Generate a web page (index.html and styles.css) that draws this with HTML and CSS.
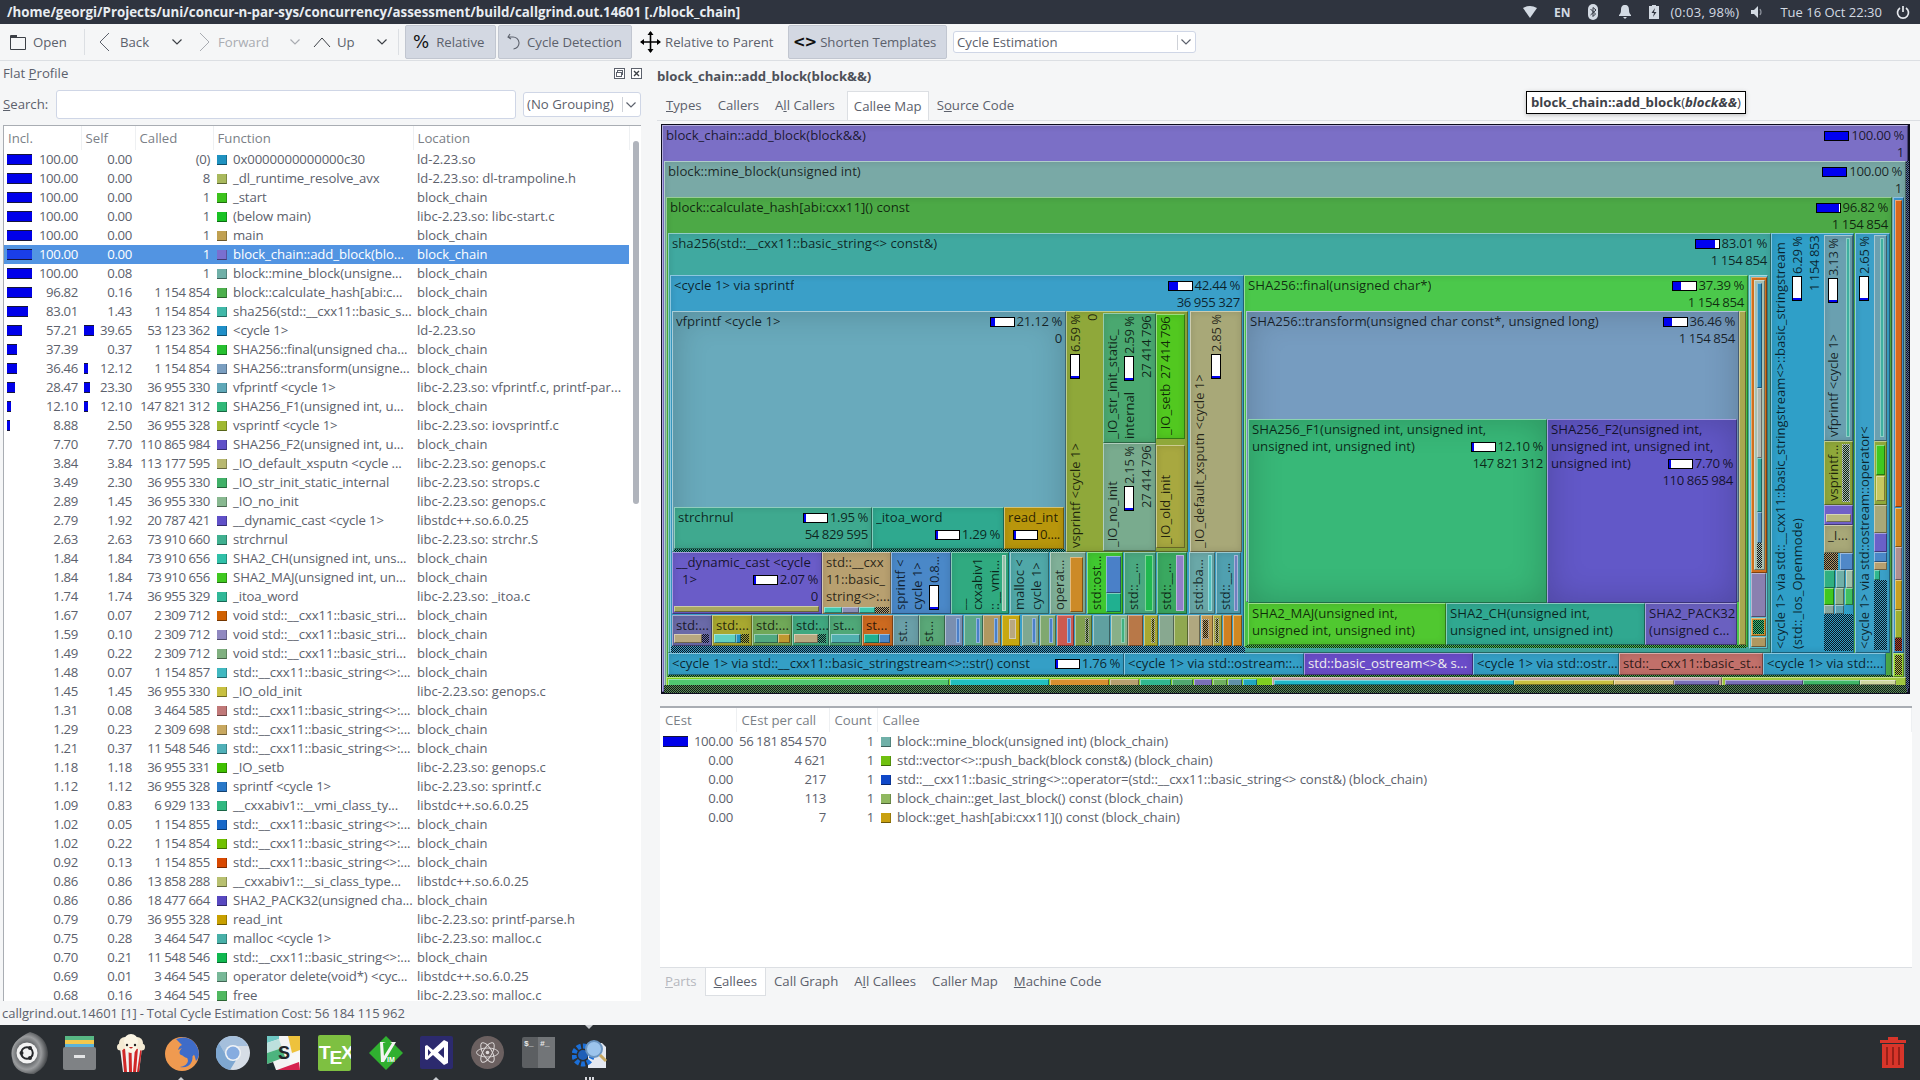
FILE: index.html
```html
<!DOCTYPE html>
<html lang="en">
<head>
<meta charset="utf-8">
<title>KCachegrind</title>
<link rel="stylesheet" href="styles.css">
</head>
<body>
<header class="topbar">
  <div class="wintitle">/home/georgi/Projects/uni/concur-n-par-sys/concurrency/assessment/build/callgrind.out.14601 [./block_chain]</div>
  <div class="tray">
    <svg class="t-wifi" width="14" height="12" viewBox="0 0 14 12"><path d="M0 2Q7-2 14 2L7 12Z" fill="#d3dae3"/></svg>
    <b class="t-en">EN</b>
    <svg class="t-bt" width="10" height="16" viewBox="0 0 10 16"><rect width="10" height="16" rx="5" fill="#d3dae3"/><path d="M2.5 5l5 5-2.500 2.500v-9L8 6 2.500 11" fill="none" stroke="#2f343f"/></svg>
    <svg class="t-bell" width="14" height="14" viewBox="0 0 14 14"><path d="M7 0c3 0 4 2 4 5 0 3 1 4 2 5v1H1v-1c1-1 2-2 2-5 0-3 1-5 4-5zM5 12h4l-2 2z" fill="#d3dae3"/></svg>
    <svg class="t-bat" width="10" height="14" viewBox="0 0 10 14"><path d="M3 0h4v1h3v13H0V1h3z" fill="#d3dae3"/><path d="M6 3L2.500 8H5l-1 4 3.500-5H5z" fill="#2f343f"/></svg>
    <span class="t-batt">(0:03, 98%)</span>
    <svg class="t-vol" width="14" height="14" viewBox="0 0 14 14"><path d="M0 5h3l4-4v12l-4-4H0z" fill="#d3dae3"/><path d="M9 4q2 3 0 6" fill="none" stroke="#8a8f99" stroke-width="1.300"/></svg>
    <span class="t-clock">Tue 16 Oct 22:30</span>
    <svg class="t-pow" width="14" height="14" viewBox="0 0 14 14"><path d="M4 3a5.500 5.500 0 1 0 6 0M7 1v6" fill="none" stroke="#e6e9ee" stroke-width="1.700"/></svg>
  </div>
</header>

<nav class="toolbar">
  <div class="tb tb-open"><svg width="16" height="16" viewBox="0 0 16 16"><path d="M.5 15.500V1.500h5l1 2h9v12z" fill="#f5f6f7" stroke="#3c4046"/><rect x="1" y="1" width="6" height="3" fill="#3c4046"/></svg><span>Open</span></div>
  <i class="sep sep-a"></i>
  <div class="tb tb-back"><svg width="11" height="20" viewBox="0 0 11 20"><path d="M10 1L1 10l9 9" fill="none" stroke="#5c616c"/></svg><span>Back</span></div>
  <div class="drop"><svg width="10" height="6" viewBox="0 0 10 6"><path d="M.5.500L5 5 9.500.500" fill="none" stroke="#3c4046" stroke-width="1.200"/></svg></div>
  <div class="tb tb-fwd off"><svg width="11" height="20" viewBox="0 0 11 20"><path d="M1 1l9 9-9 9" fill="none" stroke="#a9acb2"/></svg><span>Forward</span></div>
  <div class="drop"><svg width="10" height="6" viewBox="0 0 10 6"><path d="M.5.500L5 5 9.500.500" fill="none" stroke="#a9acb2" stroke-width="1.200"/></svg></div>
  <div class="tb tb-up"><svg width="18" height="11" viewBox="0 0 18 11"><path d="M1 10l8-9 8 9" fill="none" stroke="#3c4046"/></svg><span>Up</span></div>
  <div class="drop"><svg width="10" height="6" viewBox="0 0 10 6"><path d="M.5.500L5 5 9.500.500" fill="none" stroke="#3c4046" stroke-width="1.200"/></svg></div>
  <i class="sep sep-b"></i>
  <div class="tb btn tb-rel"><b class="pc">%</b><span>Relative</span></div>
  <div class="tb btn tb-cyc"><svg width="14" height="18" viewBox="0 0 14 18"><path d="M3 1L1 4l3 2M1.500 4h4a6 6 0 0 1 1 12" fill="none" stroke="#5c616c" stroke-width="1.100"/></svg><span>Cycle Detection</span></div>
  <div class="tb tb-par"><svg width="21" height="22" viewBox="0 0 21 22"><path d="M10.500 1v20M1 11h19" stroke="#000" stroke-width="1.600"/><path d="M10.500 0l3 4h-6zM10.500 22l3-4h-6zM0 11l4-3v6zM21 11l-4-3v6z" fill="#000"/></svg><span>Relative to Parent</span></div>
  <div class="tb btn tb-sho"><b class="ang">&lt;&gt;</b><span>Shorten Templates</span></div>
  <div class="combo combo-est"><span>Cycle Estimation</span><em></em><svg width="10" height="6" viewBox="0 0 10 6"><path d="M.5.500L5 5 9.500.500" fill="none" stroke="#5c616c" stroke-width="1.200"/></svg></div>
</nav>

<main class="main">
  <section class="left">
    <div class="panelhead">
      <span>Flat <u>P</u>rofile</span>
      <div class="dockbtns">
        <svg width="11" height="11" viewBox="0 0 11 11"><rect x=".5" y=".5" width="10" height="10" fill="#fff" stroke="#5c616c"/><rect x="3.500" y="2.500" width="5" height="4" fill="none" stroke="#5c616c"/><rect x="2.500" y="4.500" width="5" height="4" fill="#fff" stroke="#5c616c"/></svg>
        <svg width="11" height="11" viewBox="0 0 11 11"><rect x=".5" y=".5" width="10" height="10" fill="#fff" stroke="#5c616c"/><path d="M3 3l5 5M8 3l-5 5" stroke="#3c4046" stroke-width="1.400"/></svg>
      </div>
    </div>
    <div class="searchrow">
      <label><u>S</u>earch:</label>
      <div class="input"></div>
      <div class="combo combo-grp"><span>(No Grouping)</span><em></em><svg width="10" height="6" viewBox="0 0 10 6"><path d="M.5.500L5 5 9.500.500" fill="none" stroke="#5c616c" stroke-width="1.200"/></svg></div>
    </div>
    <div class="tablebox">
      <table class="flat">
        <thead><tr><th class="c1">Incl.</th><th class="c2">Self</th><th class="c3">Called</th><th class="c4">Function</th><th class="c5">Location</th></tr></thead>
        <tbody>
<tr><td class="n1"><i class="cb" style="width:25px"></i>100.00</td><td class="n1">0.00</td><td class="n1">(0)</td><td class="fn"><i class="sq" style="background:#1f92c0"></i>0x0000000000000c30</td><td class="lc">ld-2.23.so</td></tr>
<tr><td class="n1"><i class="cb" style="width:25px"></i>100.00</td><td class="n1">0.00</td><td class="n1">8</td><td class="fn"><i class="sq" style="background:#a9b95d"></i>_dl_runtime_resolve_avx</td><td class="lc">ld-2.23.so: dl-trampoline.h</td></tr>
<tr><td class="n1"><i class="cb" style="width:25px"></i>100.00</td><td class="n1">0.00</td><td class="n1">1</td><td class="fn"><i class="sq" style="background:#3cc21c"></i>_start</td><td class="lc">block_chain</td></tr>
<tr><td class="n1"><i class="cb" style="width:25px"></i>100.00</td><td class="n1">0.00</td><td class="n1">1</td><td class="fn"><i class="sq" style="background:#19c224"></i>(below main)</td><td class="lc">libc-2.23.so: libc-start.c</td></tr>
<tr><td class="n1"><i class="cb" style="width:25px"></i>100.00</td><td class="n1">0.00</td><td class="n1">1</td><td class="fn"><i class="sq" style="background:#c0a050"></i>main</td><td class="lc">block_chain</td></tr>
<tr class="sel"><td class="n1"><i class="cb" style="width:25px"></i>100.00</td><td class="n1">0.00</td><td class="n1">1</td><td class="fn"><i class="sq" style="background:#7a6fd0"></i>block_chain::add_block(blo...</td><td class="lc">block_chain</td></tr>
<tr><td class="n1"><i class="cb" style="width:25px"></i>100.00</td><td class="n1">0.08</td><td class="n1">1</td><td class="fn"><i class="sq" style="background:#70b0a8"></i>block::mine_block(unsigne...</td><td class="lc">block_chain</td></tr>
<tr><td class="n1"><i class="cb" style="width:25px"></i>96.82</td><td class="n1">0.16</td><td class="n1">1 154 854</td><td class="fn"><i class="sq" style="background:#4caf4c"></i>block::calculate_hash[abi:c...</td><td class="lc">block_chain</td></tr>
<tr><td class="n1"><i class="cb" style="width:21px"></i>83.01</td><td class="n1">1.43</td><td class="n1">1 154 854</td><td class="fn"><i class="sq" style="background:#40b8a8"></i>sha256(std::__cxx11::basic_s...</td><td class="lc">block_chain</td></tr>
<tr><td class="n1"><i class="cb" style="width:15px"></i>57.21</td><td class="n1"><i class="cb" style="width:10px"></i>39.65</td><td class="n1">53 123 362</td><td class="fn"><i class="sq" style="background:#1f8fc8"></i>&lt;cycle 1&gt;</td><td class="lc">ld-2.23.so</td></tr>
<tr><td class="n1"><i class="cb" style="width:10px"></i>37.39</td><td class="n1">0.37</td><td class="n1">1 154 854</td><td class="fn"><i class="sq" style="background:#26c030"></i>SHA256::final(unsigned cha...</td><td class="lc">block_chain</td></tr>
<tr><td class="n1"><i class="cb" style="width:10px"></i>36.46</td><td class="n1"><i class="cb" style="width:4px"></i>12.12</td><td class="n1">1 154 854</td><td class="fn"><i class="sq" style="background:#7a9ec0"></i>SHA256::transform(unsigne...</td><td class="lc">block_chain</td></tr>
<tr><td class="n1"><i class="cb" style="width:8px"></i>28.47</td><td class="n1"><i class="cb" style="width:6px"></i>23.30</td><td class="n1">36 955 330</td><td class="fn"><i class="sq" style="background:#5fa8b8"></i>vfprintf &lt;cycle 1&gt;</td><td class="lc">libc-2.23.so: vfprintf.c, printf-par...</td></tr>
<tr><td class="n1"><i class="cb" style="width:4px"></i>12.10</td><td class="n1"><i class="cb" style="width:4px"></i>12.10</td><td class="n1">147 821 312</td><td class="fn"><i class="sq" style="background:#30b878"></i>SHA256_F1(unsigned int, u...</td><td class="lc">block_chain</td></tr>
<tr><td class="n1"><i class="cb" style="width:3px"></i>8.88</td><td class="n1">2.50</td><td class="n1">36 955 328</td><td class="fn"><i class="sq" style="background:#9fb830"></i>vsprintf &lt;cycle 1&gt;</td><td class="lc">libc-2.23.so: iovsprintf.c</td></tr>
<tr><td class="n1">7.70</td><td class="n1">7.70</td><td class="n1">110 865 984</td><td class="fn"><i class="sq" style="background:#6050c8"></i>SHA256_F2(unsigned int, u...</td><td class="lc">block_chain</td></tr>
<tr><td class="n1">3.84</td><td class="n1">3.84</td><td class="n1">113 177 595</td><td class="fn"><i class="sq" style="background:#b8b870"></i>_IO_default_xsputn &lt;cycle ...</td><td class="lc">libc-2.23.so: genops.c</td></tr>
<tr><td class="n1">3.49</td><td class="n1">2.30</td><td class="n1">36 955 330</td><td class="fn"><i class="sq" style="background:#40b068"></i>_IO_str_init_static_internal</td><td class="lc">libc-2.23.so: strops.c</td></tr>
<tr><td class="n1">2.89</td><td class="n1">1.45</td><td class="n1">36 955 330</td><td class="fn"><i class="sq" style="background:#88b890"></i>_IO_no_init</td><td class="lc">libc-2.23.so: genops.c</td></tr>
<tr><td class="n1">2.79</td><td class="n1">1.92</td><td class="n1">20 787 421</td><td class="fn"><i class="sq" style="background:#6050c8"></i>__dynamic_cast &lt;cycle 1&gt;</td><td class="lc">libstdc++.so.6.0.25</td></tr>
<tr><td class="n1">2.63</td><td class="n1">2.63</td><td class="n1">73 910 660</td><td class="fn"><i class="sq" style="background:#40b090"></i>strchrnul</td><td class="lc">libc-2.23.so: strchr.S</td></tr>
<tr><td class="n1">1.84</td><td class="n1">1.84</td><td class="n1">73 910 656</td><td class="fn"><i class="sq" style="background:#30c0a8"></i>SHA2_CH(unsigned int, uns...</td><td class="lc">block_chain</td></tr>
<tr><td class="n1">1.84</td><td class="n1">1.84</td><td class="n1">73 910 656</td><td class="fn"><i class="sq" style="background:#40c820"></i>SHA2_MAJ(unsigned int, un...</td><td class="lc">block_chain</td></tr>
<tr><td class="n1">1.74</td><td class="n1">1.74</td><td class="n1">36 955 329</td><td class="fn"><i class="sq" style="background:#30b898"></i>_itoa_word</td><td class="lc">libc-2.23.so: _itoa.c</td></tr>
<tr><td class="n1">1.67</td><td class="n1">0.07</td><td class="n1">2 309 712</td><td class="fn"><i class="sq" style="background:#d06000"></i>void std::__cxx11::basic_stri...</td><td class="lc">block_chain</td></tr>
<tr><td class="n1">1.59</td><td class="n1">0.10</td><td class="n1">2 309 712</td><td class="fn"><i class="sq" style="background:#9088c0"></i>void std::__cxx11::basic_stri...</td><td class="lc">block_chain</td></tr>
<tr><td class="n1">1.49</td><td class="n1">0.22</td><td class="n1">2 309 712</td><td class="fn"><i class="sq" style="background:#80b080"></i>void std::__cxx11::basic_stri...</td><td class="lc">block_chain</td></tr>
<tr><td class="n1">1.48</td><td class="n1">0.07</td><td class="n1">1 154 857</td><td class="fn"><i class="sq" style="background:#40b8c0"></i>std::__cxx11::basic_string&lt;&gt;:...</td><td class="lc">block_chain</td></tr>
<tr><td class="n1">1.45</td><td class="n1">1.45</td><td class="n1">36 955 330</td><td class="fn"><i class="sq" style="background:#c8c040"></i>_IO_old_init</td><td class="lc">libc-2.23.so: genops.c</td></tr>
<tr><td class="n1">1.31</td><td class="n1">0.08</td><td class="n1">3 464 585</td><td class="fn"><i class="sq" style="background:#c07878"></i>std::__cxx11::basic_string&lt;&gt;:...</td><td class="lc">block_chain</td></tr>
<tr><td class="n1">1.29</td><td class="n1">0.23</td><td class="n1">2 309 698</td><td class="fn"><i class="sq" style="background:#c8a860"></i>std::__cxx11::basic_string&lt;&gt;:...</td><td class="lc">block_chain</td></tr>
<tr><td class="n1">1.21</td><td class="n1">0.37</td><td class="n1">11 548 546</td><td class="fn"><i class="sq" style="background:#50b0b8"></i>std::__cxx11::basic_string&lt;&gt;:...</td><td class="lc">block_chain</td></tr>
<tr><td class="n1">1.18</td><td class="n1">1.18</td><td class="n1">36 955 331</td><td class="fn"><i class="sq" style="background:#40c000"></i>_IO_setb</td><td class="lc">libc-2.23.so: genops.c</td></tr>
<tr><td class="n1">1.12</td><td class="n1">1.12</td><td class="n1">36 955 328</td><td class="fn"><i class="sq" style="background:#2878c8"></i>sprintf &lt;cycle 1&gt;</td><td class="lc">libc-2.23.so: sprintf.c</td></tr>
<tr><td class="n1">1.09</td><td class="n1">0.83</td><td class="n1">6 929 133</td><td class="fn"><i class="sq" style="background:#30b880"></i>__cxxabiv1::__vmi_class_ty...</td><td class="lc">libstdc++.so.6.0.25</td></tr>
<tr><td class="n1">1.02</td><td class="n1">0.05</td><td class="n1">1 154 855</td><td class="fn"><i class="sq" style="background:#1868c8"></i>std::__cxx11::basic_string&lt;&gt;:...</td><td class="lc">block_chain</td></tr>
<tr><td class="n1">1.02</td><td class="n1">0.22</td><td class="n1">1 154 854</td><td class="fn"><i class="sq" style="background:#70c000"></i>std::__cxx11::basic_string&lt;&gt;:...</td><td class="lc">block_chain</td></tr>
<tr><td class="n1">0.92</td><td class="n1">0.13</td><td class="n1">1 154 855</td><td class="fn"><i class="sq" style="background:#d84800"></i>std::__cxx11::basic_string&lt;&gt;:...</td><td class="lc">block_chain</td></tr>
<tr><td class="n1">0.86</td><td class="n1">0.86</td><td class="n1">13 858 288</td><td class="fn"><i class="sq" style="background:#b8c070"></i>__cxxabiv1::__si_class_type...</td><td class="lc">libstdc++.so.6.0.25</td></tr>
<tr><td class="n1">0.86</td><td class="n1">0.86</td><td class="n1">18 477 664</td><td class="fn"><i class="sq" style="background:#5848c0"></i>SHA2_PACK32(unsigned cha...</td><td class="lc">block_chain</td></tr>
<tr><td class="n1">0.79</td><td class="n1">0.79</td><td class="n1">36 955 328</td><td class="fn"><i class="sq" style="background:#c8a000"></i>read_int</td><td class="lc">libc-2.23.so: printf-parse.h</td></tr>
<tr><td class="n1">0.75</td><td class="n1">0.28</td><td class="n1">3 464 547</td><td class="fn"><i class="sq" style="background:#48b0a8"></i>malloc &lt;cycle 1&gt;</td><td class="lc">libc-2.23.so: malloc.c</td></tr>
<tr><td class="n1">0.70</td><td class="n1">0.21</td><td class="n1">11 548 546</td><td class="fn"><i class="sq" style="background:#10b850"></i>std::__cxx11::basic_string&lt;&gt;:...</td><td class="lc">block_chain</td></tr>
<tr><td class="n1">0.69</td><td class="n1">0.01</td><td class="n1">3 464 545</td><td class="fn"><i class="sq" style="background:#78b898"></i>operator delete(void*) &lt;cyc...</td><td class="lc">libstdc++.so.6.0.25</td></tr>
<tr><td class="n1">0.68</td><td class="n1">0.16</td><td class="n1">3 464 545</td><td class="fn"><i class="sq" style="background:#50b860"></i>free</td><td class="lc">libc-2.23.so: malloc.c</td></tr>
        </tbody>
      </table>
      <div class="sbar"><i></i></div>
    </div>
  </section>

  <section class="right">
    <h1 class="fname">block_chain::add_block(block&amp;&amp;)</h1>
    <div class="tabs toptabs">
      <span class="tab"><u>T</u>ypes</span><span class="tab">Callers</span><span class="tab">A<u>l</u>l Callers</span><span class="tab on">Callee Map</span><span class="tab">S<u>o</u>urce Code</span>
    </div>
    <div class="tip"><b>block_chain::add_block</b>(<b><em>block&amp;&amp;</em></b>)</div>

    <div class="tm">
      <!-- outer frames -->
      <div class="n" style="left:1px;top:1px;width:1246px;height:567px;background-color:#7b6fc6"><div class="r"><span class="nm">block_chain::add_block(block&amp;&amp;)</span><span class="pc2"><i class="bar"><b style="inline-size:100%"></b></i>100.00 %</span></div><div class="r e">1</div></div>
      <div class="n" style="left:3px;top:37px;width:1242px;height:529px;background-color:#79a9a6"><div class="r"><span class="nm">block::mine_block(unsigned int)</span><span class="pc2"><i class="bar"><b style="inline-size:100%"></b></i>100.00 %</span></div><div class="r e">1</div></div>
      <div class="n" style="left:5px;top:73px;width:1226px;height:491px;background-color:#4ca946"><div class="r"><span class="nm">block::calculate_hash[abi:cxx11]() const</span><span class="pc2"><i class="bar"><b style="inline-size:97%"></b></i>96.82 %</span></div><div class="r e">1 154 854</div></div>
      <!-- right column of mine_block -->
      <div class="n f" style="left:1232px;top:73px;width:11px;height:456px;background-color:#3a90c8"></div>
      <div class="n f" style="left:1234px;top:76px;width:7px;height:307px;background-color:#d8681c"></div>
      <div class="n f" style="left:1234px;top:384px;width:7px;height:39px;background-color:#d08820"></div>
      <div class="n f" style="left:1234px;top:423px;width:7px;height:33px;background-color:#b09090"></div>
      <div class="n f" style="left:1234px;top:456px;width:7px;height:30px;background-color:#c8a020"></div>
      <div class="n f" style="left:1234px;top:486px;width:7px;height:28px;background-color:#9fb030"></div>
      <div class="dz" style="left:1234px;top:514px;width:7px;height:13px;background-color:#c04020"></div>
      <div class="n f" style="left:1232px;top:529px;width:11px;height:24px;background-color:#8fd030"></div>
      <div class="dz" style="left:1234px;top:531px;width:7px;height:20px;background-color:#c0c040"></div>
      <!-- sha256 -->
      <div class="n" style="left:7px;top:109px;width:1103px;height:420px;background-color:#40a9a0"><div class="r"><span class="nm">sha256(std::__cxx11::basic_string&lt;&gt; const&amp;)</span><span class="pc2"><i class="bar"><b style="inline-size:83%"></b></i>83.01 %</span></div><div class="r e">1 154 854</div></div>
      <div class="n" style="left:9px;top:151px;width:574px;height:378px;background-color:#3a9fc8"><div class="r"><span class="nm">&lt;cycle 1&gt; via sprintf</span><span class="pc2"><i class="bar"><b style="inline-size:42%"></b></i>42.44 %</span></div><div class="r e">36 955 327</div></div>
      <!-- vfprintf -->
      <div class="n big" style="left:11px;top:187px;width:394px;height:241px;background-color:#69aabc"><div class="r"><span class="nm">vfprintf &lt;cycle 1&gt;</span><span class="pc2"><i class="bar"><b style="inline-size:21%"></b></i>21.12 %</span></div><div class="r e">0</div></div>
      <div class="n" style="left:13px;top:383px;width:198px;height:42px;background-color:#3fa98f"><div class="r"><span class="nm">strchrnul</span><span class="pc2"><i class="bar"><b style="inline-size:5%"></b></i>1.95 %</span></div><div class="r e">54 829 595</div></div>
      <div class="n" style="left:211px;top:383px;width:132px;height:42px;background-color:#2fa98f"><div class="r"><span class="nm">_itoa_word</span></div><div class="r e"><span class="pc2"><i class="bar"><b style="inline-size:4%"></b></i>1.29 %</span></div></div>
      <div class="n" style="left:343px;top:383px;width:60px;height:42px;background-color:#b8960c"><div class="r"><span class="nm">read_int</span></div><div class="r e"><span class="pc2"><i class="bar"><b style="inline-size:3%"></b></i>0....</span></div></div>
      <div class="dz" style="left:13px;top:425px;width:391px;height:3px;background-color:#2fa98f"></div>
      <!-- vsprintf column -->
      <div class="n v" style="left:405px;top:187px;width:122px;height:241px;background-color:#8fa83a"><div class="in"><div class="r"><span class="nm">vsprintf &lt;cycle 1&gt;</span><span class="pc2"><i class="bar"><b style="inline-size:7%"></b></i>6.59 %</span></div><div class="r e">0</div></div></div>
      <div class="n v" style="left:442px;top:189px;width:53px;height:130px;background-color:#4aa870"><div class="in"><div class="r"><span class="nm">_IO_str_init_static_</span></div><div class="r"><span class="nm">internal</span><span class="pc2"><i class="bar"><b style="inline-size:3%"></b></i>2.59 %</span></div><div class="r e">27 414 796</div></div></div>
      <div class="n v" style="left:495px;top:190px;width:29px;height:125px;background-color:#52c820"><div class="in"><div class="r"><span class="nm">_IO_setb</span><span class="pc2">27 414 796</span></div></div></div>
      <div class="n v" style="left:442px;top:319px;width:53px;height:108px;background-color:#79ab8e"><div class="in"><div class="r"><span class="nm">_IO_no_init</span></div><div class="r e"><span class="pc2"><i class="bar"><b style="inline-size:3%"></b></i>2.15 %</span></div><div class="r e">27 414 796</div></div></div>
      <div class="n v" style="left:495px;top:321px;width:29px;height:103px;background-color:#a8a840"><div class="in"><div class="r"><span class="nm">_IO_old_init</span></div></div></div>
      <div class="n v" style="left:529px;top:187px;width:52px;height:241px;background-color:#a8a878"><div class="in"><div class="r"><span class="nm">_IO_default_xsputn &lt;cycle 1&gt;</span></div><div class="r e"><span class="pc2"><i class="bar"><b style="inline-size:3%"></b></i>2.85 %</span></div></div></div>
      <!-- row 552-614 -->
      <div class="n" style="left:11px;top:428px;width:150px;height:62px;background-color:#6a5cc8"><div class="r"><span class="nm">__dynamic_cast &lt;cycle</span></div><div class="r"><span class="nm ind">1&gt;</span><span class="pc2"><i class="bar"><b style="inline-size:4%"></b></i>2.07 %</span></div><div class="r e">0</div></div>
      <div class="n f" style="left:13px;top:482px;width:145px;height:6px;background-color:#a8a860"></div>
      <div class="n" style="left:161px;top:428px;width:69px;height:62px;background-color:#b8a070"><div class="r">std::__cxx</div><div class="r">11::basic_</div><div class="r">string&lt;&gt;:...</div></div>
      <div class="n f" style="left:163px;top:483px;width:18px;height:6px;background-color:#40c8b0"></div>
      <div class="n f" style="left:181px;top:483px;width:17px;height:6px;background-color:#8a90b8"></div>
      <div class="n f" style="left:198px;top:483px;width:16px;height:6px;background-color:#40c8b0"></div>
      <div class="dz" style="left:214px;top:483px;width:14px;height:6px;background-color:#b8a070"></div>
      <div class="n v" style="left:230px;top:428px;width:60px;height:62px;background-color:#4a88c8"><div class="in"><div class="r">sprintf &lt;</div><div class="r">cycle 1&gt;</div><div class="r"><span class="pc2 p0"><i class="bar"><b style="inline-size:3%"></b></i>0.8...</span></div></div></div>
      <div class="n v" style="left:290px;top:428px;width:58px;height:62px;background-color:#30aa80"><div class="in"><div class="r">__</div><div class="r">cxxabiv1</div><div class="r">::__vmi...</div></div><i class="st" style="background:#90c0a8"></i></div>
      <div class="n v" style="left:349px;top:428px;width:39px;height:62px;background-color:#50a8a8"><div class="in"><div class="r">malloc &lt;</div><div class="r">cycle 1&gt;</div></div></div>
      <div class="n v" style="left:389px;top:428px;width:36px;height:62px;background-color:#80b098"><div class="in"><div class="r">operat...</div></div></div>
      <div class="n f" style="left:409px;top:433px;width:13px;height:55px;background-color:#cc8a28"></div>
      <div class="n v" style="left:426px;top:428px;width:36px;height:62px;background-color:#40c830"><div class="in"><div class="r">std::ost...</div></div></div>
      <div class="n f" style="left:445px;top:432px;width:15px;height:37px;background-color:#4a80c8"></div>
      <div class="n f" style="left:445px;top:469px;width:15px;height:19px;background-color:#20b090"></div>
      <div class="n v" style="left:463px;top:428px;width:32px;height:62px;background-color:#4aa880"><div class="in"><div class="r">std::__...</div></div><i class="st w" style="background:#20b850"></i></div>
      <div class="n v" style="left:496px;top:428px;width:30px;height:62px;background-color:#3aa860"><div class="in"><div class="r">std::__...</div></div><i class="st w" style="background:#9080c8"></i></div>
      <div class="n v" style="left:528px;top:428px;width:26px;height:62px;background-color:#6aa8a8"><div class="in"><div class="r">std::ba...</div></div><i class="st" style="background:#50c0c0"></i></div>
      <div class="n v" style="left:555px;top:428px;width:25px;height:62px;background-color:#50a0b0"><div class="in"><div class="r">std::__...</div></div><i class="st" style="background:#7080c0"></i></div>
      <!-- row 615-645 -->
      <div class="n" style="left:11px;top:491px;width:40px;height:31px;background-color:#6a6aa8"><div class="r">std:...</div></div>
      <div class="n f" style="left:13px;top:510px;width:28px;height:9px;background-color:#b8a880"></div><div class="dz" style="left:41px;top:510px;width:7px;height:9px;background-color:#6a6aa8"></div>
      <div class="n" style="left:51px;top:491px;width:40px;height:31px;background-color:#a8a830"><div class="r">std:...</div></div>
      <div class="n f" style="left:53px;top:510px;width:22px;height:9px;background-color:#60d0c0"></div><div class="n f" style="left:75px;top:510px;width:5px;height:9px;background-color:#2090c0"></div><div class="dz" style="left:80px;top:510px;width:8px;height:9px;background-color:#a8a830"></div>
      <div class="n" style="left:91px;top:491px;width:40px;height:31px;background-color:#70a858"><div class="r">std:...</div></div>
      <div class="n f" style="left:93px;top:510px;width:24px;height:9px;background-color:#50a880"></div><div class="n f" style="left:117px;top:510px;width:12px;height:9px;background-color:#c09830"></div>
      <div class="n" style="left:131px;top:491px;width:37px;height:31px;background-color:#40a880"><div class="r">std:...</div></div>
      <div class="n f" style="left:133px;top:510px;width:24px;height:9px;background-color:#b8a880"></div><div class="dz" style="left:157px;top:510px;width:8px;height:9px;background-color:#40a880"></div>
      <div class="n" style="left:168px;top:491px;width:33px;height:31px;background-color:#4fa878"><div class="r">st...</div></div>
      <div class="n f" style="left:170px;top:510px;width:29px;height:9px;background-color:#50b0b0"></div>
      <div class="n" style="left:201px;top:491px;width:31px;height:31px;background-color:#cc6a20"><div class="r">st...</div></div>
      <div class="n f" style="left:203px;top:510px;width:15px;height:9px;background-color:#20b090"></div><div class="n f" style="left:218px;top:510px;width:11px;height:9px;background-color:#4a88c8"></div>
      <div class="n v" style="left:232px;top:491px;width:26px;height:31px;background-color:#6a9fa8"><div class="in"><div class="r">st...</div></div></div>
      <div class="n v" style="left:258px;top:491px;width:26px;height:31px;background-color:#5aa878"><div class="in"><div class="r">st...</div></div></div>
      <div class="n f" style="left:284px;top:491px;width:18px;height:31px;background-color:#7a8fb0"><i class="st" style="background:#4a80c8"></i></div>
      <div class="n f" style="left:303px;top:491px;width:19px;height:31px;background-color:#5ca888"><i class="st" style="background:#4a80c8"></i></div>
      <div class="n f" style="left:322px;top:491px;width:18px;height:31px;background-color:#b09860"><i class="st" style="background:#4a80c8"></i></div>
      <div class="n f" style="left:341px;top:491px;width:18px;height:31px;background-color:#c8a810"><i class="st x" style="background:#b8a880"></i></div>
      <div class="n f" style="left:361px;top:491px;width:17px;height:31px;background-color:#80a890"><i class="st" style="background:#4a80c8"></i></div>
      <div class="n f" style="left:379px;top:491px;width:16px;height:31px;background-color:#80a870"><i class="st" style="background:#4a80c8"></i></div>
      <div class="n f" style="left:396px;top:491px;width:17px;height:31px;background-color:#cc5a50"><i class="st" style="background:#4a80c8"></i></div>
      <div class="n f" style="left:414px;top:491px;width:17px;height:31px;background-color:#80a050"><i class="st d" style="background-color:#80a050"></i></div>
      <div class="n f" style="left:432px;top:491px;width:17px;height:31px;background-color:#60a0a0"></div>
      <div class="n f" style="left:450px;top:491px;width:17px;height:31px;background-color:#88b088"><i class="st" style="background:#40b080"></i></div>
      <div class="n f" style="left:467px;top:491px;width:15px;height:31px;background-color:#b87848"></div>
      <div class="n f" style="left:483px;top:491px;width:14px;height:31px;background-color:#a8a830"><i class="st d" style="background-color:#a8a830"></i></div>
      <div class="n f" style="left:498px;top:491px;width:15px;height:31px;background-color:#88a890"></div>
      <div class="n f" style="left:513px;top:491px;width:14px;height:31px;background-color:#90a850"></div>
      <div class="n f" style="left:527px;top:491px;width:12px;height:31px;background-color:#b0a880"></div>
      <div class="n f" style="left:540px;top:491px;width:12px;height:31px;background-color:#c09850"><i class="st x d" style="background-color:#c09850"></i></div>
      <div class="n f" style="left:552px;top:491px;width:9px;height:31px;background-color:#a8a840"><i class="st d" style="background-color:#a8a840"></i></div>
      <div class="n f" style="left:562px;top:491px;width:9px;height:31px;background-color:#d08020"></div>
      <div class="n f" style="left:572px;top:491px;width:9px;height:31px;background-color:#d08820"></div>
      <div class="dz" style="left:10px;top:522px;width:574px;height:7px;background-color:#3a9fc8"></div>
      <!-- SHA256::final -->
      <div class="n" style="left:583px;top:151px;width:504px;height:372px;background-color:#4bc84b"><div class="r"><span class="nm">SHA256::final(unsigned char*)</span><span class="pc2"><i class="bar"><b style="inline-size:37%"></b></i>37.39 %</span></div><div class="r e">1 154 854</div></div>
      <div class="n big" style="left:585px;top:187px;width:493px;height:291px;background-color:#769cc0"><div class="r"><span class="nm">SHA256::transform(unsigned char const*, unsigned long)</span><span class="pc2"><i class="bar"><b style="inline-size:36%"></b></i>36.46 %</span></div><div class="r e">1 154 854</div></div>
      <div class="n big" style="left:587px;top:295px;width:299px;height:184px;background-color:#38b878"><div class="r"><span class="nm">SHA256_F1(unsigned int, unsigned int,</span></div><div class="r"><span class="nm">unsigned int, unsigned int)</span><span class="pc2"><i class="bar"><b style="inline-size:12%"></b></i>12.10 %</span></div><div class="r e">147 821 312</div></div>
      <div class="n big" style="left:886px;top:295px;width:190px;height:184px;background-color:#6258c8"><div class="r"><span class="nm">SHA256_F2(unsigned int,</span></div><div class="r">unsigned int, unsigned int,</div><div class="r"><span class="nm">unsigned int)</span><span class="pc2"><i class="bar"><b style="inline-size:8%"></b></i>7.70 %</span></div><div class="r e">110 865 984</div></div>
      <div class="n f" style="left:1078px;top:187px;width:7px;height:334px;background-color:#a8a850"></div>
      <div class="n" style="left:587px;top:479px;width:198px;height:42px;background-color:#50c830"><div class="r">SHA2_MAJ(unsigned int,</div><div class="r">unsigned int, unsigned int)</div></div>
      <div class="n" style="left:785px;top:479px;width:199px;height:42px;background-color:#30a890"><div class="r">SHA2_CH(unsigned int,</div><div class="r">unsigned int, unsigned int)</div></div>
      <div class="n" style="left:984px;top:479px;width:92px;height:42px;background-color:#6a60c0"><div class="r">SHA2_PACK32</div><div class="r">(unsigned c...</div></div>
      <div class="dz" style="left:585px;top:521px;width:500px;height:3px;background-color:#4bc84b"></div>
      <!-- thin column -->
      <div class="n f" style="left:1088px;top:151px;width:19px;height:374px;background-color:#60c0d0"></div>
      <div class="n f" style="left:1090px;top:153px;width:16px;height:296px;background-color:#d0701c"></div>
      <div class="n f" style="left:1093px;top:156px;width:11px;height:290px;background-color:#a8c0b0"></div>
      <div class="n f" style="left:1096px;top:159px;width:5px;height:105px;background-color:#3090c0"></div>
      <div class="n f" style="left:1096px;top:264px;width:5px;height:70px;background-color:#b0b8b0"></div>
      <div class="n f" style="left:1096px;top:334px;width:5px;height:54px;background-color:#30a8a0"></div>
      <div class="n f" style="left:1096px;top:388px;width:5px;height:31px;background-color:#5090c0"></div>
      <div class="dz" style="left:1096px;top:419px;width:5px;height:25px;background-color:#a8c0b0"></div>
      <div class="n f" style="left:1090px;top:449px;width:15px;height:44px;background-color:#8a80b0"></div>
      <div class="n f" style="left:1090px;top:494px;width:15px;height:18px;background-color:#d09030"></div>
      <div class="dz" style="left:1092px;top:496px;width:11px;height:14px;background-color:#30c870"></div>
      <div class="n f" style="left:1090px;top:513px;width:15px;height:10px;background-color:#b09860"></div>
      <!-- stringstream block -->
      <div class="n v" style="left:1110px;top:109px;width:83px;height:420px;background-color:#2f9fc8"><div class="in"><div class="r"><span class="nm">&lt;cycle 1&gt; via std::__cxx11::basic_stringstream&lt;&gt;::basic_stringstream</span></div><div class="r"><span class="nm">(std::_Ios_Openmode)</span><span class="pc2"><i class="bar"><b style="inline-size:6%"></b></i>6.29 %</span></div><div class="r e">1 154 853</div></div></div>
      <div class="n v" style="left:1163px;top:111px;width:29px;height:206px;background-color:#6aa0b0"><div class="in"><div class="r"><span class="nm">vfprintf &lt;cycle 1&gt;</span><span class="pc2"><i class="bar"><b style="inline-size:3%"></b></i>3.13 %</span></div></div><i class="st up" style="background:#40b0a0"></i></div>
      <div class="n v" style="left:1163px;top:317px;width:29px;height:64px;background-color:#8fa83a"><div class="in"><div class="r">vsprintf...</div></div><i class="st w d" style="background-color:#a0c0a0"></i></div>
      <div class="n f" style="left:1163px;top:381px;width:29px;height:20px;background-color:#7060c8"></div>
      <div class="n f" style="left:1165px;top:390px;width:25px;height:8px;background-color:#b8b880"></div>
      <div class="n" style="left:1163px;top:401px;width:29px;height:28px;background-color:#a8a878"><div class="r">_I...</div></div>
      <div class="dz" style="left:1163px;top:429px;width:14px;height:17px;background-color:#b89860"></div>
      <div class="n f" style="left:1179px;top:429px;width:13px;height:17px;background-color:#5088c8"></div>
      <div class="n f" style="left:1163px;top:446px;width:11px;height:18px;background-color:#30b080"></div>
      <div class="n f" style="left:1175px;top:446px;width:9px;height:18px;background-color:#70b0a8"></div>
      <div class="n f" style="left:1185px;top:446px;width:7px;height:18px;background-color:#a0c0a8"></div>
      <div class="n f" style="left:1163px;top:464px;width:10px;height:17px;background-color:#40c820"></div>
      <div class="n f" style="left:1174px;top:464px;width:9px;height:17px;background-color:#88b088"></div>
      <div class="n f" style="left:1184px;top:464px;width:8px;height:17px;background-color:#40c060"></div>
      <div class="n f" style="left:1163px;top:481px;width:10px;height:9px;background-color:#88a8a0"></div>
      <div class="n f" style="left:1174px;top:481px;width:9px;height:9px;background-color:#60a0b0"></div>
      <div class="dz" style="left:1163px;top:490px;width:29px;height:37px;background-color:#2f9fc8"></div>
      <!-- ostream block -->
      <div class="n v" style="left:1194px;top:109px;width:35px;height:420px;background-color:#3aa0c8"><div class="in"><div class="r"><span class="nm">&lt;cycle 1&gt; via std::ostream::operator&lt;</span><span class="pc2"><i class="bar"><b style="inline-size:3%"></b></i>2.65 %</span></div></div></div>
      <div class="n f" style="left:1213px;top:111px;width:13px;height:206px;background-color:#6aa0b0"><i class="st up" style="background:#40b0a0"></i></div>
      <div class="n f" style="left:1213px;top:317px;width:13px;height:64px;background-color:#8fa83a"></div>
      <div class="n f" style="left:1215px;top:321px;width:9px;height:30px;background-color:#40c820"></div>
      <div class="n f" style="left:1215px;top:352px;width:9px;height:25px;background-color:#c8c860"></div>
      <div class="n f" style="left:1213px;top:381px;width:13px;height:28px;background-color:#a8a878"></div>
      <div class="n f" style="left:1213px;top:409px;width:13px;height:19px;background-color:#6a60c8"></div>
      <div class="n f" style="left:1213px;top:428px;width:13px;height:10px;background-color:#4a88c8"></div>
      <div class="n f" style="left:1213px;top:438px;width:13px;height:8px;background-color:#b8a070"></div>
      <div class="n f" style="left:1213px;top:446px;width:6px;height:10px;background-color:#30b890"></div>
      <div class="dz" style="left:1213px;top:456px;width:13px;height:70px;background-color:#3aa0c8"></div>
      <!-- row under sha256 -->
      <div class="n" style="left:7px;top:529px;width:456px;height:22px;background-color:#349fc6"><div class="r"><span class="nm">&lt;cycle 1&gt; via std::__cxx11::basic_stringstream&lt;&gt;::str() const</span><span class="pc2"><i class="bar"><b style="inline-size:4%"></b></i>1.76 %</span></div></div>
      <div class="n" style="left:463px;top:529px;width:180px;height:22px;background-color:#349fc6"><div class="r">&lt;cycle 1&gt; via std::ostream::...</div></div>
      <div class="n wt" style="left:643px;top:529px;width:169px;height:22px;background-color:#6a4cc8"><div class="r">std::basic_ostream&lt;&gt;&amp; s...</div></div>
      <div class="n" style="left:812px;top:529px;width:146px;height:22px;background-color:#349fc6"><div class="r">&lt;cycle 1&gt; via std::ostr...</div></div>
      <div class="n" style="left:958px;top:529px;width:144px;height:22px;background-color:#c2706a"><div class="r">std::__cxx11::basic_st...</div></div>
      <div class="n" style="left:1102px;top:529px;width:123px;height:22px;background-color:#349fc6"><div class="r">&lt;cycle 1&gt; via std::...</div></div>
      <div class="dz" style="left:7px;top:551px;width:1225px;height:2px;background-color:#4ca946"></div>
      <!-- bottom strip -->
      <div class="n f" style="left:5px;top:553px;width:1240px;height:12px;background-color:#80d020"></div>
      <div class="n f" style="left:7px;top:555px;width:281px;height:7px;background-color:#50c870"></div>
      <div class="n f" style="left:289px;top:555px;width:99px;height:7px;background-color:#20c0c0"></div>
      <div class="n f" style="left:389px;top:555px;width:59px;height:7px;background-color:#d89030"></div>
      <div class="n f" style="left:449px;top:555px;width:29px;height:7px;background-color:#b8a070"></div>
      <div class="n f" style="left:479px;top:555px;width:31px;height:7px;background-color:#30b890"></div>
      <div class="n f" style="left:511px;top:555px;width:21px;height:7px;background-color:#50a870"></div>
      <div class="n f" style="left:533px;top:555px;width:18px;height:7px;background-color:#7a70b8"></div>
      <div class="n f" style="left:552px;top:555px;width:14px;height:7px;background-color:#70b060"></div>
      <div class="n f" style="left:567px;top:555px;width:14px;height:7px;background-color:#6090a8"></div>
      <div class="n f" style="left:582px;top:555px;width:14px;height:7px;background-color:#20a8c0"></div>
      <div class="n f" style="left:611px;top:553px;width:450px;height:10px;background-color:#c0a0a0"></div>
      <div class="n f" style="left:613px;top:556px;width:240px;height:5px;background-color:#20b8c8"></div>
      <div class="n f" style="left:853px;top:556px;width:100px;height:5px;background-color:#c8c040"></div>
      <div class="n f" style="left:953px;top:556px;width:60px;height:5px;background-color:#e0c880"></div>
      <div class="n f" style="left:1013px;top:556px;width:45px;height:5px;background-color:#7a70b8"></div>
      <div class="n f" style="left:1061px;top:553px;width:184px;height:10px;background-color:#a0c840"></div>
      <div class="n f" style="left:1064px;top:556px;width:78px;height:5px;background-color:#7a70b8"></div>
      <div class="n f" style="left:1142px;top:556px;width:57px;height:5px;background-color:#40b868"></div>
      <div class="n f" style="left:1199px;top:556px;width:36px;height:5px;background-color:#d0d8a0"></div>
      <!-- cut-off areas -->
      <div class="dz" style="left:3px;top:561px;width:1243px;height:8px;background-color:#5a8f50"></div>
      <div class="dz" style="left:1245px;top:37px;width:3px;height:528px;background-color:#5a6fa0"></div>
    </div>

    <div class="splitter"></div>

    <div class="lowerpane">
      <table class="callees">
        <thead><tr><th class="k1">CEst</th><th class="k2">CEst per call</th><th class="k3">Count</th><th>Callee</th></tr></thead>
        <tbody>
          <tr><td class="n1"><i class="cb" style="width:25px"></i>100.00</td><td class="n1">56 181 854 570</td><td class="n1">1</td><td class="fn"><i class="sq" style="background:#70b0a8"></i>block::mine_block(unsigned int) (block_chain)</td></tr>
          <tr><td class="n1">0.00</td><td class="n1">4 621</td><td class="n1">1</td><td class="fn"><i class="sq" style="background:#70c010"></i>std::vector&lt;&gt;::push_back(block const&amp;) (block_chain)</td></tr>
          <tr><td class="n1">0.00</td><td class="n1">217</td><td class="n1">1</td><td class="fn"><i class="sq" style="background:#1048c8"></i>std::__cxx11::basic_string&lt;&gt;::operator=(std::__cxx11::basic_string&lt;&gt; const&amp;) (block_chain)</td></tr>
          <tr><td class="n1">0.00</td><td class="n1">113</td><td class="n1">1</td><td class="fn"><i class="sq" style="background:#90b860"></i>block_chain::get_last_block() const (block_chain)</td></tr>
          <tr><td class="n1">0.00</td><td class="n1">7</td><td class="n1">1</td><td class="fn"><i class="sq" style="background:#c8a010"></i>block::get_hash[abi:cxx11]() const (block_chain)</td></tr>
        </tbody>
      </table>
    </div>
    <div class="tabs lowtabs">
      <span class="tab dis"><u>P</u>arts</span><span class="tab on"><u>C</u>allees</span><span class="tab">Call Graph</span><span class="tab">A<u>l</u>l Callees</span><span class="tab">Caller Map</span><span class="tab"><u>M</u>achine Code</span>
    </div>
  </section>
</main>

<footer class="status">callgrind.out.14601 [1] - Total Cycle Estimation Cost: 56 184 115 962</footer>

<div class="dock">
  <div class="di"><svg width="38" height="42" viewBox="0 0 38 42"><defs><radialGradient id="ug" cx=".42" cy=".5" r=".6"><stop offset=".35" stop-color="#55585b"/><stop offset=".65" stop-color="#9a9c9e"/><stop offset="1" stop-color="#34373a"/></radialGradient></defs><path d="M20 0q16 4 18 20 1 14-14 22Q4 42 2 26-2 10 20 0z" fill="url(#ug)"/><circle cx="17" cy="21" r="10.500" fill="#f2f2f2"/><circle cx="17" cy="21" r="5.800" fill="none" stroke="#26282b" stroke-width="2"/><circle cx="11.500" cy="21" r="2" fill="#26282b"/><circle cx="20" cy="16" r="2" fill="#26282b"/><circle cx="20" cy="26" r="2" fill="#26282b"/></svg></div>
  <div class="di"><svg width="33" height="34" viewBox="0 0 33 34"><rect x="2" y="0" width="29" height="4" fill="#58b884"/><rect x="2" y="4" width="29" height="4" fill="#f4c84c"/><rect x="2" y="8" width="29" height="4" fill="#5cb2d8"/><rect y="11" width="33" height="23" rx="2" fill="#7f8285"/><rect x="11" y="19" width="11" height="3" fill="#e4e5e6"/></svg></div>
  <div class="di"><svg width="28" height="38" viewBox="0 0 28 38"><path d="M3 14h22l-3 24H6z" fill="#f2f2f2"/><path d="M5 14h3l2 24H7zM11.500 14h3l.5 24h-3zM18 14h3l-2 24h-3zM23.500 14H25l-3 24h-2z" fill="#d02828"/><circle cx="8" cy="9" r="6" fill="#f4ebd4"/><circle cx="20" cy="9" r="6" fill="#f4ebd4"/><circle cx="14" cy="7" r="7" fill="#fbf5e4"/><circle cx="3.500" cy="13" r="3.500" fill="#f4ebd4"/><circle cx="24.500" cy="13" r="3.500" fill="#f4ebd4"/><circle cx="14" cy="13" r="6" fill="#fbf5e4"/><circle cx="10" cy="11" r="1.200" fill="#222"/><circle cx="18" cy="11" r="1.200" fill="#222"/><path d="M12 13q2 3 4 0z" fill="#c02020"/></svg></div>
  <div class="di"><svg width="36" height="36" viewBox="0 0 36 36"><circle cx="18" cy="19" r="17" fill="#ef9a50"/><path d="M12 4q10-4 17 2 6 6 6 14-1 4-3 6-2-12-12-13-3 0-6 2 1-4 4-5-3-3-6-6z" fill="#3f6cc8"/><path d="M17 14q8-1 11 5 2 8-4 12-4 2-8 1 7-1 8-6 0-5-7-6-3-2 0-6z" fill="#3f6cc8"/><circle cx="24" cy="16" r="7" fill="#3f6cc8"/></svg></div>
  <div class="di"><svg width="34" height="34" viewBox="0 0 34 34"><circle cx="17" cy="17" r="17" fill="#d6dde6"/><path d="M17 0a17 17 0 0 0-14 7l8 14a7 7 0 0 1 6-11h15A17 17 0 0 0 17 0z" fill="#a5bfdc"/><path d="M3 7a17 17 0 0 0 11 27l8-13a7 7 0 0 1-11 0z" fill="#7ea7d1"/><circle cx="17" cy="17" r="8" fill="#f0f3f6"/><circle cx="17" cy="17" r="6.500" fill="#86ace0"/></svg></div>
  <div class="di"><svg width="33" height="38" viewBox="0 0 33 38"><rect y="2" width="33" height="34" fill="#f4f4f4"/><path d="M0 2h12v3L0 9z" fill="#6fc8c4"/><path d="M0 9l12-4 3 9-15 5z" fill="#bde0dd"/><path d="M0 19l15-5 3 9L0 30z" fill="#4cb47e"/><path d="M0 30l6-2 3 8H0z" fill="#1f2c30"/><path d="M21 2h12v14l-8 3z" fill="#eec23c"/><path d="M18 23l15-6v11L24 30z" fill="#f7f7f7"/><path d="M10 36l22-8 1 8z" fill="#d6224e"/><text x="17" y="25" class="svgs">S</text></svg></div>
  <div class="di"><svg width="33" height="36" viewBox="0 0 33 36"><rect width="33" height="36" rx="2" fill="#7ec041"/><text x="1" y="24" class="svgt">T<tspan dy="5">E</tspan><tspan dy="-5">X</tspan></text></svg></div>
  <div class="di"><svg width="34" height="34" viewBox="0 0 34 34"><path d="M17 0l17 17-17 17L0 17z" fill="#30b030"/><path d="M11 6h6l-3 1 1 13 8-13-2-1h6L15 26h-3z" fill="#f4f4f4"/><text x="18" y="26" class="svgv">IM</text></svg></div>
  <div class="di"><svg width="33" height="33" viewBox="0 0 33 33"><rect width="33" height="33" rx="2" fill="#2c2a6e"/><path d="M24 4l4 2v21l-4 2L13 19l-6 5-2-1v-13l2-1 6 5zM24 11l-6 5.500 6 5.500zM8 13v7l3-3.500z" fill="#fff"/></svg></div>
  <div class="di"><svg width="33" height="33" viewBox="0 0 33 33"><circle cx="16.500" cy="16.500" r="16.500" fill="#6b6060"/><g fill="none" stroke="#e0dcdc" stroke-width=".9"><ellipse cx="16.500" cy="16.500" rx="11" ry="4.500"/><ellipse cx="16.500" cy="16.500" rx="11" ry="4.500" transform="rotate(60 16.500 16.500)"/><ellipse cx="16.500" cy="16.500" rx="11" ry="4.500" transform="rotate(120 16.500 16.500)"/></g><circle cx="16.500" cy="16.500" r="1.800" fill="#e0dcdc"/></svg></div>
  <div class="di"><svg width="33" height="31" viewBox="0 0 33 31"><rect width="33" height="31" rx="2" fill="#5c5f62"/><rect x="16" width="17" height="31" fill="#727578"/><text x="2" y="9" class="svgc">$_</text><text x="18" y="9" class="svgc">#_</text></svg></div>
  <div class="di"><svg width="36" height="36" viewBox="0 0 36 36"><path d="M16 8h14l4 4v21H16z" fill="#e4e8f0"/><circle cx="11" cy="20" r="9" fill="none" stroke="#1b6fd8" stroke-width="5" stroke-dasharray="4 2"/><circle cx="11" cy="20" r="5" fill="#1f5fb8"/><circle cx="22" cy="14" r="8" fill="#9cc4ec" stroke="#6a94c0" stroke-width="2"/><path d="M28 20l6 6" stroke="#c8a860" stroke-width="3"/></svg></div>
  <div class="di trash"><svg width="30" height="34" viewBox="0 0 30 34"><rect x="2" y="4" width="26" height="3" fill="#d8352a"/><rect x="10" y="1" width="10" height="3" fill="#d8352a"/><path d="M4 8h22v24H4z" fill="#d8352a"/><path d="M9 11v18M15 11v18M21 11v18" stroke="#9a2018" stroke-width="2"/></svg></div>
  <i class="ind i-top"></i><i class="ind i-ff"></i><i class="ind i-vs"></i><i class="dots"></i>
</div>
</body>
</html>
```
FILE: styles.css
```css
* { box-sizing: border-box; }
html, body { margin: 0; height: 100%; }
body {
  width: 1920px; height: 1080px; overflow: hidden;
  background: #f5f6f7; color: #5c616c;
  font: 13.200px/19px "Open Sans", "Noto Sans", sans-serif;
  display: flex; flex-direction: column;
}
u { text-decoration: underline; }
svg { display: block; flex: none; }

/* top panel */
.topbar { height: 24px; flex: none; background: #2f343f; color: #d3dae3; display: flex; justify-content: space-between; align-items: center; padding-left: 7px; }
.wintitle { font-weight: 700; font-size: 13.300px; color: #e8ecf1; white-space: nowrap; }
.tray { display: flex; align-items: center; font-size: 13px; height: 24px; padding-right: 10px; }
.t-en { font-size: 12px; margin-left: 17px; }
.t-bt { margin-left: 18px; }
.t-bell { margin-left: 20px; }
.t-bat { margin-left: 17px; }
.t-batt { margin-left: 11px; white-space: nowrap; letter-spacing: .3px; }
.t-vol { margin-left: 12px; }
.t-clock { margin-left: 15px; white-space: nowrap; }
.t-pow { margin-left: 14px; }

/* toolbar */
.toolbar { height: 37px; flex: none; display: flex; align-items: center; border-bottom: 1px solid #dcdfe3; background: #f5f6f7; }
.tb { height: 34px; display: flex; align-items: center; white-space: nowrap; flex: none; }
.tb.off { color: #a9acb2; }
.tb-open { width: 78px; padding-left: 10px; gap: 7px; }
.sep { display: block; width: 1px; height: 26px; background: #dcdfe3; flex: none; }
.sep-a { margin-left: 6px; }
.sep-b { margin-left: 1px; }
.tb-back { width: 77px; padding-left: 14px; gap: 10px; }
.drop { width: 30px; height: 34px; flex: none; display: flex; align-items: center; justify-content: center; }
.tb-fwd { width: 88px; padding-left: 7px; gap: 8px; }
.tb-up { width: 57px; padding-left: 3px; gap: 6px; }
.btn { background: #d3d8e2; border: 1px solid #c1c6d0; border-radius: 2px; }
.tb-rel { width: 91px; margin-left: 6px; padding-left: 7px; gap: 7px; }
.tb-cyc { width: 134px; margin-left: 2px; padding-left: 8px; gap: 6px; }
.tb-par { width: 156px; padding-left: 8px; gap: 4px; }
.tb-sho { width: 159px; padding-left: 4px; gap: 4px; }
.pc { font: 400 17px "DejaVu Sans", sans-serif; color: #111; }
.ang { font: 700 15px/19px "DejaVu Sans", sans-serif; color: #111; letter-spacing: -1px; }
.combo { display: flex; align-items: center; background: #fff; border: 1px solid #cfd6e6; border-radius: 3px; flex: none; white-space: nowrap; }
.combo span { flex: 1; }
.combo em { width: 1px; height: 15px; background: #cfd2d8; margin-right: 3px; }
.combo svg { margin-right: 4px; }
.combo-est { width: 243px; height: 22px; margin-left: 6px; padding-left: 3px; }

/* main */
.main { flex: none; height: 940px; display: flex; }
.left { width: 657px; flex: none; padding-left: 3px; display: flex; flex-direction: column; }
.panelhead { height: 25px; flex: none; display: flex; align-items: center; justify-content: space-between; padding-right: 15px; }
.dockbtns { display: flex; gap: 6px; }
.searchrow { height: 35px; margin: 1px 0 3px; flex: none; display: flex; align-items: center; padding-right: 16px; }
.searchrow label { width: 53px; flex: none; }
.input { width: 460px; height: 29px; background: #fff; border: 1px solid #cfd6e6; border-radius: 3px; flex: none; }
.combo-grp { width: 118px; height: 25px; margin-left: 7px; padding-left: 3px; }
.tablebox { flex: 1; min-height: 0; width: 638px; background: #fff; border-left: 1px solid #a9adb3; border-top: 1px solid #a9adb3; display: flex; overflow: hidden; }
table { border-collapse: collapse; table-layout: fixed; }
.flat { width: 625px; flex: none; }
th { font-weight: 400; text-align: left; height: 24px; padding: 0 0 0 4px; color: #7b7f87; border-right: 1px solid #eef0f2; white-space: nowrap; overflow: hidden; }
.c1 { width: 77px; } .c2 { width: 54px; } .c3 { width: 78px; } .c4 { width: 200px; } .c5 { width: 216px; }
td { height: 19px; padding: 0; white-space: nowrap; overflow: hidden; }
.n1 { text-align: right; padding: 0 3px 0 3px; letter-spacing: -.35px; word-spacing: -.4px; }
.fn { padding-left: 4px; letter-spacing: -.1px; }
.lc { padding-left: 4px; font-size: 13px; }
.cb { float: left; height: 11px; margin-top: 4px; background: #0000ea; border-block: 1px solid #16163a; }
.sq { display: inline-block; width: 10px; height: 10px; margin-right: 6px; vertical-align: -1px; border-bottom: 1px solid rgba(0,0,0,.45); border-right: 1px solid rgba(0,0,0,.25); }
.sel td { background: #5294e2; color: #fff; }
.sel .cb { background: #1a3ee8; }
.sbar { flex: 1; position: relative; }
.sbar i { display: block; width: 6px; height: 363px; margin: 15px 0 0 3px; background: #b0b4bc; border-radius: 3px; }

/* right pane */
.right { flex: 1; min-width: 0; position: relative; display: flex; flex-direction: column; }
.fname { margin: 0; height: 30px; flex: none; font: 700 13.200px/30px "Open Sans", sans-serif; color: #4d5159; }
.tabs { display: flex; flex: none; white-space: nowrap; }
.toptabs { height: 30px; padding-left: 1px; width: 1263px; border-bottom: 1px solid #dcdfe3; }
.toptabs .tab { padding: 0 8px; line-height: 29px; }
.toptabs .tab.on { margin-left: 4px; padding: 0 6px; }
.tab.on { background: #fff; border: 1px solid #dcdfe3; height: 30px; }
.tab.dis { color: #b5b8be; }
.tip { position: absolute; left: 869px; top: 30px; height: 23px; background: #fff; border: 1px solid #000; padding: 0 4px; line-height: 21px; color: #3e4249; white-space: nowrap; box-shadow: 0 1px 4px rgba(0,0,0,.25); z-index: 5; }
.tm { position: relative; flex: none; width: 1249px; height: 570px; margin: 3px 0 0 4px; background: #0d0d1e; overflow: hidden; font-size: 13.200px; line-height: 17px; color: rgba(0,0,0,.78); }
.n { position: absolute; overflow: hidden; padding: 1px 3px 0; border: 1px solid; border-color: rgba(255,255,255,.42) rgba(0,0,0,.4) rgba(0,0,0,.4) rgba(255,255,255,.42); box-shadow: inset 0 0 7px rgba(0,0,0,.12); }
.n.big { box-shadow: inset 0 0 34px rgba(0,0,0,.2); }
.n.f { padding: 0; box-shadow: none; }
.n.wt { color: #eee; }
.n.v { padding: 2px 0 3px; font-size: 13px; }
.in { writing-mode: vertical-rl; transform: rotate(180deg); width: 100%; height: 100%; }
.r { display: flex; justify-content: space-between; align-items: center; block-size: 17px; white-space: nowrap; flex: none; }
.r.e { justify-content: flex-end; letter-spacing: -.3px; word-spacing: -.4px; }
.nm { overflow: hidden; min-inline-size: 0; flex: 0 1 auto; }
.ind { margin-inline-start: 6px; }
.pc2 { display: flex; align-items: center; gap: 2px; flex: none; margin-inline-start: 4px; letter-spacing: -.3px; word-spacing: -.4px; }
.pc2.p0 { margin: 0; }
.r.e .pc2 { margin: 0; }
.bar { display: block; inline-size: 25px; block-size: 10px; border: 1px solid #000; background: #fff; flex: none; }
.bar b { display: block; block-size: 100%; background: #0000f0; min-inline-size: 2px; }
.dz { position: absolute; background-image: conic-gradient(#10141c 25%, transparent 0 50%, #10141c 0 75%, transparent 0); background-size: 2px 2px; }
.st { position: absolute; right: 2px; top: 2px; bottom: 2px; width: 4px; border: 1px solid rgba(255,255,255,.4); }
.st.w { width: 8px; }
.st.x { right: 3px; top: 3px; bottom: 6px; width: 7px; }
.st.up { bottom: 3px; }
.st.d { background-image: conic-gradient(#10141c 25%, transparent 0 50%, #10141c 0 75%, transparent 0); background-size: 2px 2px; }
.splitter { height: 12px; flex: none; }
.lowerpane { margin-left: 3px; width: 1252px; height: 261px; flex: none; background: #fff; border-top: 2px solid #a9adb3; }
.callees { width: 1252px; }
.callees th { height: 24px; padding-left: 5px; }
.k1 { width: 76px; } .k2 { width: 93px; } .k3 { width: 48px; }
.lowtabs { height: 29px; margin-left: 3px; width: 1252px; border-top: 1px solid #dcdfe3; }
.lowtabs .tab { padding: 0 8px; line-height: 26px; }
.lowtabs .tab.dis { margin-left: -3px; }
.lowtabs .tab.on { height: 29px; margin-top: -1px; background: #fff; }

.status { height: 24px; flex: none; padding-left: 2px; line-height: 25px; font-size: 13px; word-spacing: -.5px; }

/* dock */
.dock { position: relative; height: 55px; flex: 1; background: #2a2e32; display: flex; align-items: center; padding-left: 3px; }
.di { width: 51px; height: 55px; flex: none; display: flex; align-items: center; justify-content: center; }
.trash { margin-left: auto; margin-right: 2px; }
.svgs { font: 900 18px "Liberation Sans", sans-serif; fill: #23262a; text-anchor: middle; }
.svgt { font: 700 19px "Liberation Sans", sans-serif; fill: #fff; letter-spacing: -1px; }
.svgv { font: 700 7px "Liberation Sans", sans-serif; fill: #fff; }
.svgc { font: 700 8px "Liberation Mono", monospace; fill: #e8e8e8; }
.dock .ind { position: absolute; margin: 0; width: 0; height: 0; border: 4px solid transparent; }
.i-top { left: 585px; top: 0; border-top-color: #c8cbcf !important; }
.i-ff { left: 177px; bottom: -1px; border-bottom-color: #c8cbcf !important; }
.i-vs { left: 432px; bottom: -1px; border-bottom-color: #c8cbcf !important; }
.dots { position: absolute; left: 585px; bottom: 0; width: 9px; height: 3px; background: repeating-linear-gradient(90deg, #d8dade 0 2px, transparent 2px 3.500px); }
```
